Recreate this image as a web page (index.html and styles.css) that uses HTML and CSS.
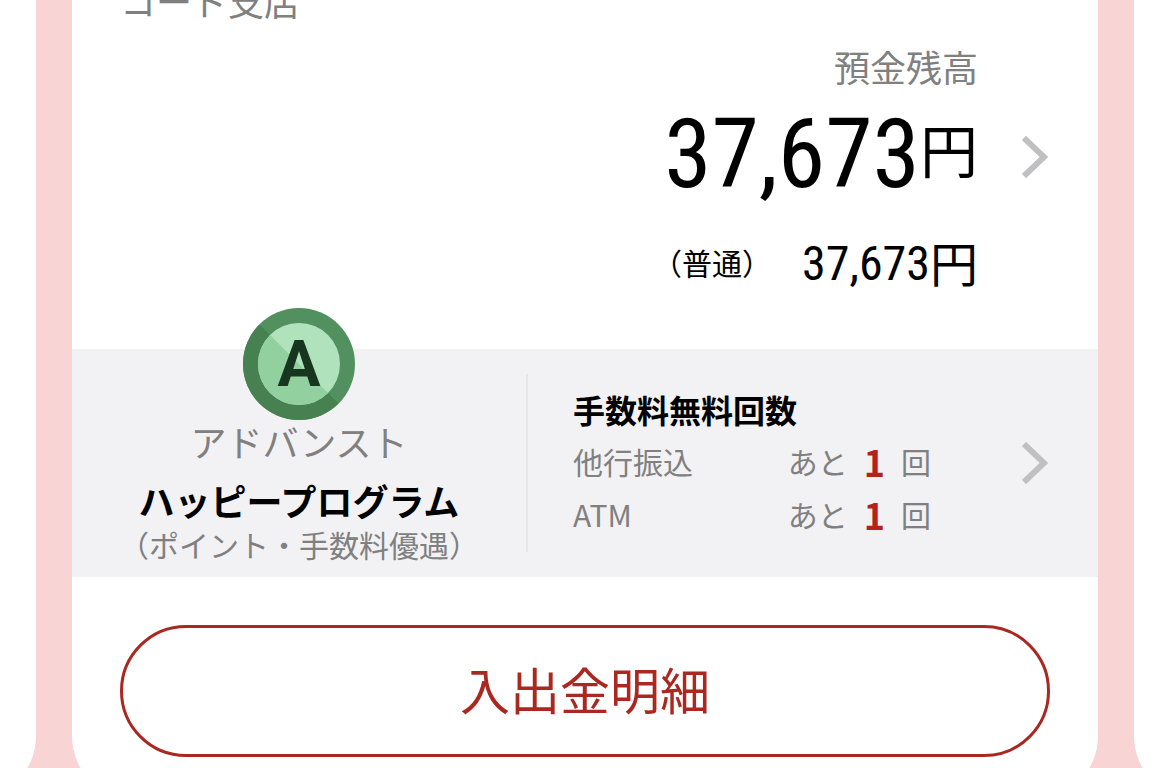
FILE: index.html
```html
<!DOCTYPE html>
<html lang="ja">
<head>
    <meta charset="UTF-8">
    <meta name="viewport" content="width=device-width, initial-scale=1.0">
    <title>預金残高</title>
    <link rel="stylesheet" href="styles.css">
</head>
<body>
    <main class="carousel">
        <div class="card card-prev"></div>

        <section class="card card-current">
            <p class="branch">コード支店</p>

            <a class="balance" href="#">
                <span class="balance-label">預金残高</span>
                <span class="balance-total">
                    <span class="digits">37,673</span><span class="yen">円</span>
                </span>
                <svg class="chevron" viewBox="0 0 26 42"><path d="M2 2 L22 21 L2 40"/></svg>
                <span class="balance-detail">
                    <span class="kind">（普通）</span>
                    <span class="detail-amount"><span class="digits">37,673</span><span class="yen">円</span></span>
                </span>
            </a>

            <div class="program">
                <a class="stage" href="#">
                    <svg class="medal" viewBox="0 0 112 112">
                        <circle cx="56" cy="56" r="56" fill="#52905f"/>
                        <path d="M16.4 16.4 A56 56 0 0 0 95.6 95.6 Z" fill="#478152"/>
                        <circle cx="56" cy="56" r="41" fill="#b0e3bc"/>
                        <path d="M27 27 A41 41 0 0 0 85 85 Z" fill="#93d0a0"/>
                        <text x="56" y="78" text-anchor="middle">A</text>
                    </svg>
                    <span class="stage-name">アドバンスト</span>
                    <strong class="program-name">ハッピープログラム</strong>
                    <span class="program-note">（ポイント・手数料優遇）</span>
                </a>
                <a class="free" href="#">
                    <span class="free-counts">
                        <strong class="free-title">手数料無料回数</strong>
                        <span class="free-row">
                            <span>他行振込</span>
                            <span class="remain">あと<b>1</b>回</span>
                        </span>
                        <span class="free-row">
                            <span>ATM</span>
                            <span class="remain">あと<b>1</b>回</span>
                        </span>
                    </span>
                    <svg class="chevron" viewBox="0 0 26 42"><path d="M2 2 L22 21 L2 40"/></svg>
                </a>
            </div>

            <button class="statement" type="button">入出金明細</button>
        </section>

        <div class="card card-next"></div>
    </main>
</body>
</html>
```

FILE: styles.css
```css
/* General Styles */
* {
    box-sizing: border-box;
    margin: 0;
    padding: 0;
}

body {
    font-family: "Noto Sans CJK JP", sans-serif;
    background-color: #f8d4d4;
    color: #000;
    overflow: hidden;
}

a {
    color: inherit;
    text-decoration: none;
}

/* Carousel */
.carousel {
    display: flex;
    gap: 36px;
    margin-top: -20px;
    overflow: hidden;
}

.card {
    background-color: #fff;
    border-radius: 0 0 64px 64px;
}

/* Neighbour cards, only their edges are on screen */
.card-prev {
    flex: 0 0 128px;
    margin-left: -92px;
}

.card-current {
    flex: 1;
    padding-bottom: 43px;
}

.card-next {
    flex: 0 0 128px;
    margin-right: -93px;
}

.chevron {
    width: 26px;
    height: 42px;
    fill: none;
    stroke: #c0c0c2;
    stroke-width: 6;
}

/* Balance */
.branch {
    padding-left: 48px;
    font-size: 36px;
    line-height: 40px;
    color: #808080;
}

.balance {
    display: grid;
    grid-template-columns: 1fr 26px;
    column-gap: 44px;
    align-items: center;
    justify-items: end;
    padding: 26px 50px 49px 0;
}

.balance-label {
    grid-column: 1;
    font-size: 36px;
    line-height: 40px;
    color: #808080;
}

.digits {
    font-family: "Roboto Condensed", "Liberation Sans Narrow", Roboto, sans-serif;
}

.yen {
    line-height: 1;
}

.balance-total {
    grid-column: 1;
    display: flex;
    align-items: center;
    padding-bottom: 6px;
    font-size: 96px;
    line-height: 136px;
}

.balance-total .yen {
    padding-bottom: 12px;
    font-size: 58px;
}

.balance-detail {
    grid-column: 1;
    display: flex;
    align-items: center;
    gap: 30px;
    line-height: 72px;
}

.kind {
    padding-bottom: 4px;
    font-size: 30px;
    line-height: 1;
}

.detail-amount {
    display: flex;
    align-items: center;
    font-size: 48px;
}

.detail-amount .yen {
    padding-bottom: 6px;
}

/* Happy program */
.program {
    display: flex;
    height: 228px;
    background-color: #f2f2f5;
}

.stage {
    flex: 0 0 454px;
    display: flex;
    flex-direction: column;
    align-items: center;
    margin-top: -41px;
}

.medal {
    width: 112px;
    height: 112px;
}

.medal text {
    font-family: Roboto, sans-serif;
    font-size: 64px;
    font-weight: 700;
    fill: #18361f;
}

.stage-name {
    font-size: 36px;
    line-height: 42px;
    color: #808080;
}

.program-name {
    margin-top: 12px;
    font-size: 36px;
    line-height: 52px;
}

.program-note {
    font-size: 30px;
    line-height: 36px;
    color: #808080;
}

.free {
    flex: 1;
    display: flex;
    justify-content: space-between;
    align-items: center;
    margin: 25px 0;
    padding: 0 50px 0 45px;
    border-left: 2px solid #e7e7ea;
}

.free-counts {
    display: flex;
    flex-direction: column;
    width: 358px;
    padding-bottom: 3px;
}

.free-title {
    font-size: 32px;
    line-height: 52px;
}

.free-row {
    display: flex;
    justify-content: space-between;
    font-size: 30px;
    line-height: 53px;
    color: #808080;
}

.remain {
    display: flex;
    gap: 16px;
}

.remain b {
    font-size: 36px;
    color: #b5221b;
}

/* Statement button */
.statement {
    display: block;
    width: calc(100% - 96px);
    height: 132px;
    margin: 48px auto 0;
    padding-bottom: 6px;
    border: 3px solid #aa2822;
    border-radius: 66px;
    background-color: #fff;
    font-family: inherit;
    font-size: 50px;
    color: #ab2821;
    cursor: pointer;
}
```
